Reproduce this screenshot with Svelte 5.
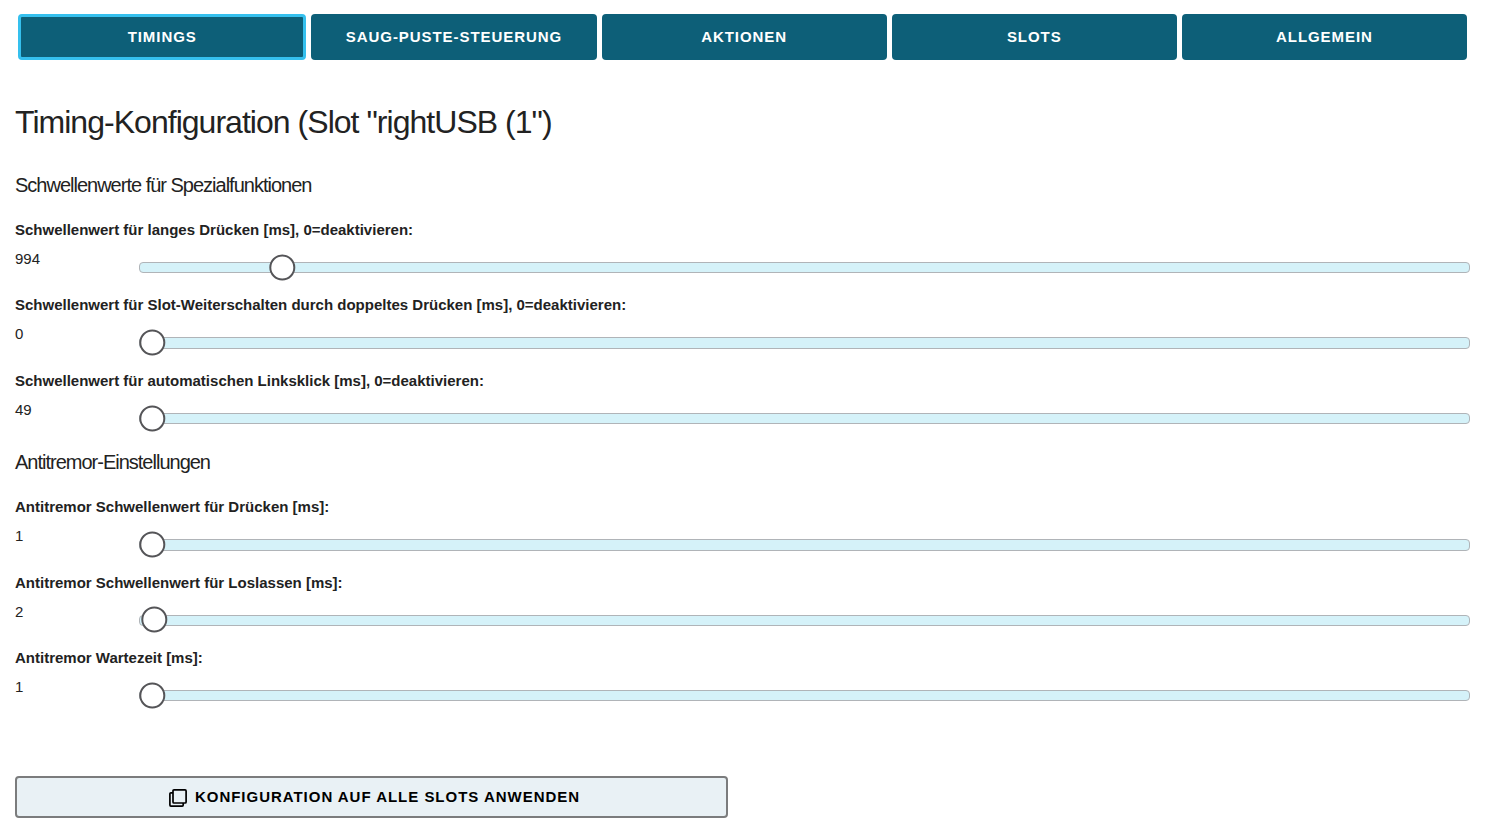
<script>
  const tabs = ['Timings', 'Saug-Puste-Steuerung', 'Aktionen', 'Slots', 'Allgemein'];
  const groups = [
    { title: 'Schwellenwerte für Spezialfunktionen', items: [
      { label: 'Schwellenwert für langes Drücken [ms], 0=deaktivieren:', value: 994, offset: 130 },
      { label: 'Schwellenwert für Slot-Weiterschalten durch doppeltes Drücken [ms], 0=deaktivieren:', value: 0, offset: 0 },
      { label: 'Schwellenwert für automatischen Linksklick [ms], 0=deaktivieren:', value: 49, offset: 0 }
    ] },
    { title: 'Antitremor-Einstellungen', items: [
      { label: 'Antitremor Schwellenwert für Drücken [ms]:', value: 1, offset: 0 },
      { label: 'Antitremor Schwellenwert für Loslassen [ms]:', value: 2, offset: 2 },
      { label: 'Antitremor Wartezeit [ms]:', value: 1, offset: 0 }
    ] }
  ];
</script>

<main>
  <nav>
    {#each tabs as tab, i}
      <button class="tab" class:active={i === 0}>{tab}</button>
    {/each}
  </nav>
  <h1>Timing-Konfiguration (Slot "rightUSB (1")</h1>
  {#each groups as group}
    <section>
      <h2>{group.title}</h2>
      {#each group.items as item}
        <div class="setting">
          <div class="label">{item.label}</div>
          <div class="row">
            <span class="value">{item.value}</span>
            <div class="track"><div class="thumb" style="margin-left: {item.offset - 0.7}px"></div></div>
          </div>
        </div>
      {/each}
    </section>
  {/each}
  <button class="apply">
    <svg width="18" height="18" viewBox="0 0 18 18" fill="none" stroke="#000" stroke-width="1.7">
      <rect x="4" y="0.9" width="13.1" height="13.1" rx="1" />
      <path d="M4 3.800H1.900a1 1 0 0 0-1 1v11.300a1 1 0 0 0 1 1h11.300a1 1 0 0 0 1-1V14" />
    </svg>
    <span>Konfiguration auf alle Slots anwenden</span>
  </button>
</main>

<style>
  :global(body) { margin: 0; background: #fff; }
  main { box-sizing: border-box; height: 837px; padding: 14px 23px 0 15px; font-family: "Liberation Sans", Arial, sans-serif; color: #222; overflow: hidden; }
  button { box-sizing: border-box; font: bold 15px/20px "Liberation Sans", Arial, sans-serif; letter-spacing: 0.94px; text-transform: uppercase; padding: 0; }
  nav { display: flex; gap: 5px; height: 46px; margin: 0 3px; }
  .tab { flex: 1 1 0; color: #fff; background: #0d5f78; border: 0; border-radius: 4px; }
  .active { flex: 0 0 288.400px; border: 3px solid #35c0ee; }
  h1 { margin: 42px 0 0; font-size: 32px; line-height: 40px; font-weight: 400; letter-spacing: -0.97px; }
  h2 { margin: 0; height: 24px; font-size: 20px; line-height: 24px; font-weight: 400; letter-spacing: -1px; }
  section { margin-top: 31px; }
  section + section { margin-top: 5.950px; }
  .setting { height: 75.450px; }
  h2 + .setting { margin-top: 21px; }
  .label { font-size: 15px; line-height: 24px; font-weight: 700; }
  .row { display: flex; height: 51px; }
  .value { width: 124px; font-size: 15px; line-height: 34px; }
  .track { box-sizing: border-box; flex: 1; height: 11.250px; margin-top: 20px; border: 1px solid #b0b4b8; border-radius: 4px; background: #d5f2f9; display: flex; align-items: center; }
  .thumb { box-sizing: border-box; flex: none; width: 26px; height: 26px; border: 2px solid #555558; border-radius: 50%; background: #fff; transform: translate(0.3px, -0.5px); }
  .apply { display: flex; align-items: center; justify-content: center; gap: 8px; width: 713px; height: 42px; margin-top: 54.400px; padding-left: 6px; color: #000; background: #e9f1f5; border: 2px solid #7b7c7d; border-radius: 4px; letter-spacing: 0.98px; }
  .apply svg { margin-top: 3px; }
</style>
